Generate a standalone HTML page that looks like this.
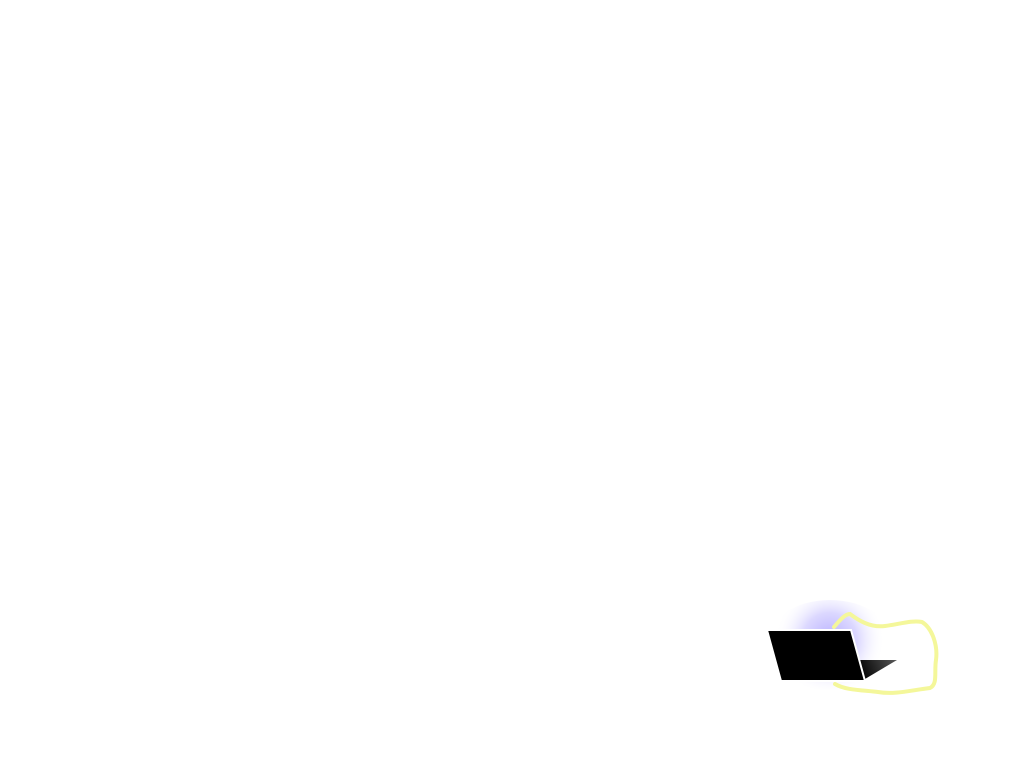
<!DOCTYPE html>
<html><head><style>html,body{margin:0;background:#fff;width:1024px;height:763px;overflow:hidden}</style></head>
<body>
<svg width="1024" height="763" style="position:absolute;left:0;top:0">
<defs>
<radialGradient id="g" cx="830" cy="640" r="55" gradientUnits="userSpaceOnUse">
<stop offset="0" stop-color="#b8b0ff"/><stop offset="0.5" stop-color="#dcd8ff"/><stop offset="1" stop-color="#fff" stop-opacity="0"/></radialGradient>
<linearGradient id="t" x1="860" y1="675" x2="895" y2="660" gradientUnits="userSpaceOnUse">
<stop offset="0" stop-color="#000"/><stop offset="1" stop-color="#555"/></linearGradient>
</defs>
<ellipse cx="830" cy="645" rx="65" ry="45" fill="url(#g)"/>
<path d="M834,627 C840,620 845,614 850,614 C858,620 870,628 885,626 C900,624 912,620 922,622 C932,628 938,645 936,660 C934,672 938,684 930,688 C912,690 895,695 878,692 C860,690 845,690 835,684" fill="none" stroke="#f4f79a" stroke-width="4" stroke-linecap="round"/>
<path d="M858,660 L897,660 L865,679 Z" fill="url(#t)"/>
<path d="M767,630 L851,630 L865,681 L781,681 Z" fill="#000" stroke="#fff" stroke-width="2"/>
</svg>
</body></html>
